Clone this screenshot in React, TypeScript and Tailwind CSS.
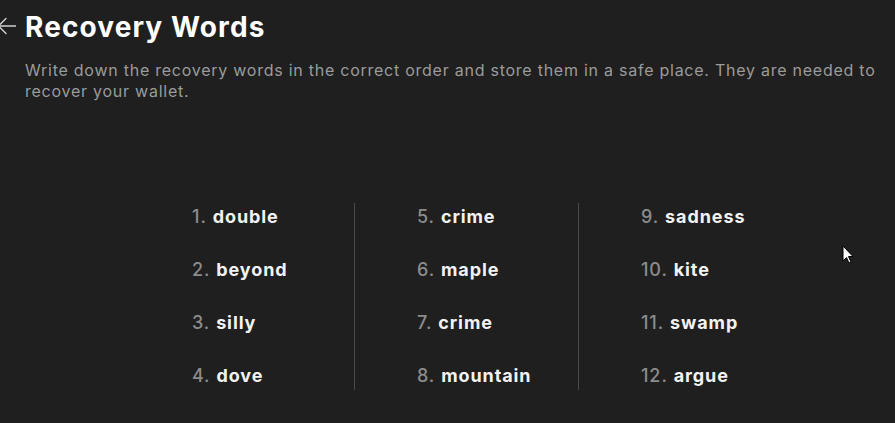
import React from "react";

const columns: { n: number; word: string }[][] = [
  [
    { n: 1, word: "double" },
    { n: 2, word: "beyond" },
    { n: 3, word: "silly" },
    { n: 4, word: "dove" },
  ],
  [
    { n: 5, word: "crime" },
    { n: 6, word: "maple" },
    { n: 7, word: "crime" },
    { n: 8, word: "mountain" },
  ],
  [
    { n: 9, word: "sadness" },
    { n: 10, word: "kite" },
    { n: 11, word: "swamp" },
    { n: 12, word: "argue" },
  ],
];

const App: React.FC = () => {
  return (
    <div className="relative h-[423px] w-full overflow-hidden bg-[#1f1f1f] font-['Inter',sans-serif] text-white">
      <div className="flex items-center pt-[9px]">
        <svg
          width="20"
          height="20"
          viewBox="0 0 20 20"
          className="-ml-[4px] mr-[9px] -mt-[2px] text-[#d0d0d0]"
          fill="none"
          stroke="currentColor"
          strokeWidth="1.4"
          strokeLinecap="round"
          strokeLinejoin="round"
        >
          <path d="M20 10H2.5" />
          <path d="M10 2.5L2.5 10l7.5 7.5" />
        </svg>
        <h1 className="text-[28px] font-bold leading-[36px] tracking-[1.1px]">Recovery Words</h1>
      </div>

      <p className="mt-[15px] pl-[25px] pr-[12px] text-[16px] leading-[21px] tracking-[0.75px] text-[#9b9b9b]">
        Write down the recovery words in the correct order and store them in a safe place. They are needed to
        recover your wallet.
      </p>

      <div className="ml-[130px] mt-[101px] flex">
        {columns.map((col, ci) => (
          <div
            key={ci}
            className={`flex w-[224px] flex-col gap-[25px] pl-[62px] ${ci > 0 ? "border-l border-[#4a4a4a]" : ""}`}
          >
            {col.map((item) => (
              <div key={item.n} className="text-[18px] leading-7 tracking-[0.9px]">
                <span className="font-medium text-[#8c8c8c]">{item.n}.</span>{" "}
                <span className="font-bold text-[#f2f2f2]">{item.word}</span>
              </div>
            ))}
          </div>
        ))}
      </div>

      <svg width="13" height="20" viewBox="0 0 13 20" className="absolute left-[842px] top-[245px]">
        <path d="M1 1v15l3.5-3.5 2.5 5.5 2-1-2.5-5.5H11z" fill="#ffffff" stroke="#000000" strokeWidth="1" strokeLinejoin="round" />
      </svg>
    </div>
  );
};

export default App;
